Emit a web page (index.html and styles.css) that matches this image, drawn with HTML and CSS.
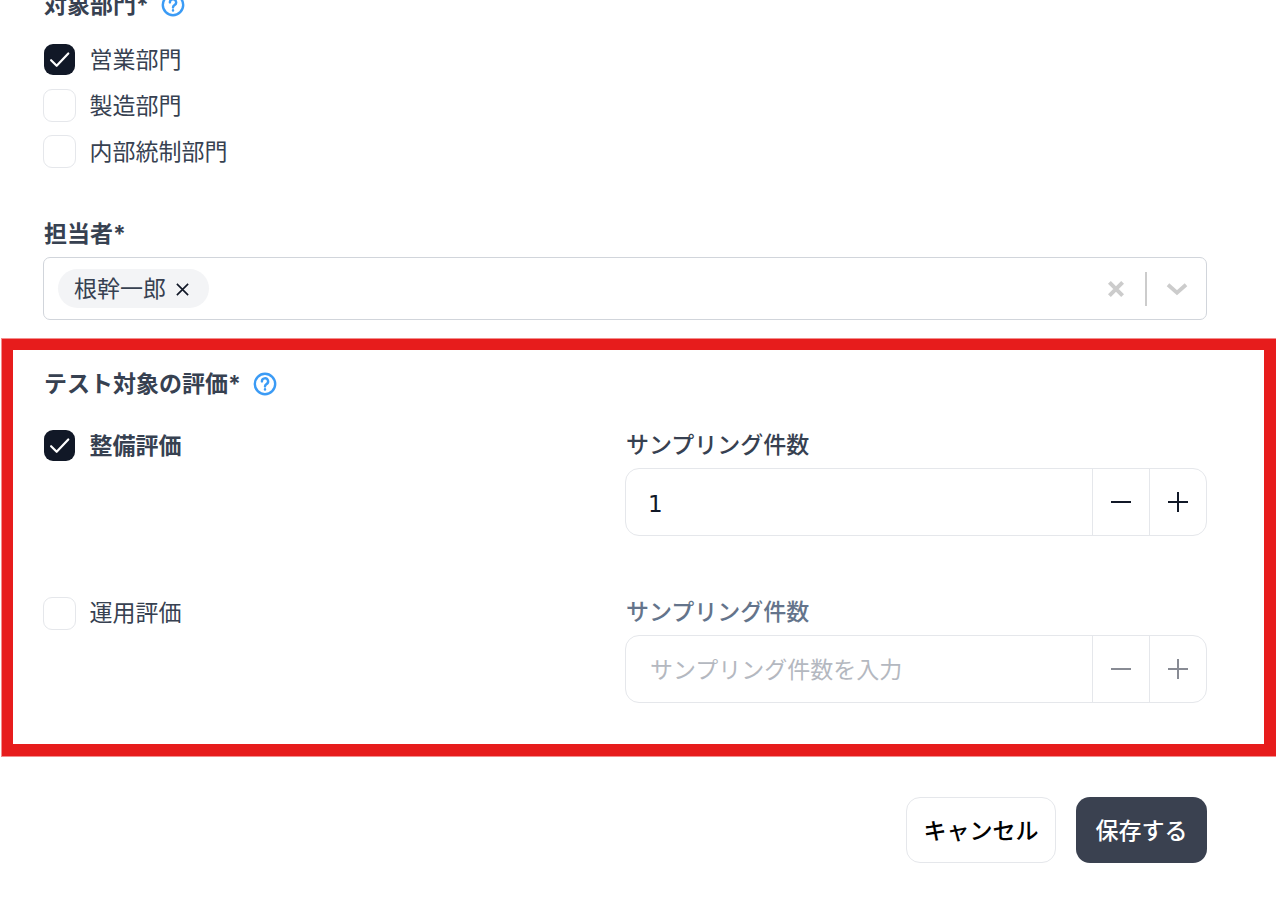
FILE: index.html
```html
<!DOCTYPE html>
<html lang="ja">
<head>
  <meta charset="utf-8">
  <title>テスト対象の評価</title>
  <link rel="stylesheet" href="styles.css">
</head>
<body>

  <form class="form">
    <div class="field">
      <div class="label-row">
        <label class="label">対象部門*</label>
        <svg class="help" viewBox="0 0 24 24"><circle cx="12" cy="12" r="10.2"/><path d="M8.900 9.400a3.100 3.100 0 1 1 4.600 2.700c-1 .6-1.500 1.200-1.500 2.300"/><path d="M12 17.300v.2"/></svg>
      </div>
      <div class="check-list">
        <div class="check-row">
          <span class="check checked"><svg viewBox="0 0 24 24"><path d="M5.500 12.600l4.300 4.300L18.800 7.300"/></svg></span>
          <span class="check-text">営業部門</span>
        </div>
        <div class="check-row">
          <span class="check"></span>
          <span class="check-text">製造部門</span>
        </div>
        <div class="check-row">
          <span class="check"></span>
          <span class="check-text">内部統制部門</span>
        </div>
      </div>
    </div>

    <div class="field owner">
      <label class="label">担当者*</label>
      <div class="select">
        <span class="chip">根幹一郎<svg viewBox="0 0 12 12"><path d="M1.500 1.500l9 9M10.500 1.500l-9 9"/></svg></span>
        <div class="select-icons">
          <svg class="clear" viewBox="0 0 20 20"><path d="M4 4l12 12M16 4L4 16"/></svg>
          <span class="select-sep"></span>
          <svg class="chevron" viewBox="0 0 20 20"><path d="M2.500 6.500L10 13l7.500-6.500"/></svg>
        </div>
      </div>
    </div>

    <div class="field evaluation">
      <div class="label-row">
        <label class="label">テスト対象の評価*</label>
        <svg class="help" viewBox="0 0 24 24"><circle cx="12" cy="12" r="10.2"/><path d="M8.900 9.400a3.100 3.100 0 1 1 4.600 2.700c-1 .6-1.500 1.200-1.500 2.300"/><path d="M12 17.300v.2"/></svg>
      </div>

      <div class="eval-row">
        <div class="check-row">
          <span class="check checked"><svg viewBox="0 0 24 24"><path d="M5.500 12.600l4.300 4.300L18.800 7.300"/></svg></span>
          <span class="check-text strong">整備評価</span>
        </div>
        <div>
          <div class="sub-label">サンプリング件数</div>
          <div class="stepper">
            <span class="stepper-value number">1</span>
            <span class="stepper-btn"><svg viewBox="0 0 20 20"><path d="M0 10h20"/></svg></span>
            <span class="stepper-btn"><svg viewBox="0 0 20 20"><path d="M0 10h20M10 0v20"/></svg></span>
          </div>
        </div>
      </div>

      <div class="eval-row disabled">
        <div class="check-row">
          <span class="check"></span>
          <span class="check-text">運用評価</span>
        </div>
        <div>
          <div class="sub-label">サンプリング件数</div>
          <div class="stepper">
            <span class="stepper-value">サンプリング件数を入力</span>
            <span class="stepper-btn"><svg viewBox="0 0 20 20"><path d="M0 10h20"/></svg></span>
            <span class="stepper-btn"><svg viewBox="0 0 20 20"><path d="M0 10h20M10 0v20"/></svg></span>
          </div>
        </div>
      </div>
    </div>

    <div class="actions">
      <button type="button" class="btn">キャンセル</button>
      <button type="button" class="btn primary">保存する</button>
    </div>
  </form>

  <div class="highlight"></div>

</body>
</html>
```

FILE: styles.css
```css
html, body {
  margin: 0;
  padding: 0;
  height: 919px;
  overflow: hidden;
  background-color: white;
}

body {
  position: relative;
  font-family: Inter, "Noto Sans CJK JP", sans-serif;
  font-size: 23px;
  color: #374151;
}

.form {
  margin-top: -13px;
  padding: 0 69px 0 43px;
}

.label-row {
  display: flex;
  align-items: center;
  gap: 12px;
  height: 36px;
  padding-left: 1px;
}

.label {
  font-weight: 700;
  line-height: 36px;
}

.help {
  width: 24px;
  height: 24px;
  fill: none;
  stroke: #3b9bf5;
  stroke-width: 2.400;
  stroke-linecap: round;
}

.check-list {
  display: flex;
  flex-direction: column;
  gap: 13px;
  margin-top: 20px;
}

.check-list .check-text {
  padding-top: 2px;
}

.check-row {
  display: flex;
  align-items: center;
  gap: 13.500px;
  height: 33px;
}

.check {
  display: block;
  box-sizing: border-box;
  flex: none;
  width: 33px;
  height: 33px;
  background-color: white;
  border: 1px solid #e5e7eb;
  border-radius: 9px;
}

.check.checked {
  width: 31px;
  height: 31px;
  margin: 0 1px;
  background-color: #111827;
  border: none;
}

.eval-row .check.checked {
  margin-top: -2px;
}

.check svg {
  display: block;
  width: 31px;
  height: 31px;
  fill: none;
  stroke: white;
  stroke-width: 1.700;
  stroke-linecap: round;
  stroke-linejoin: round;
}

.check-text {
  line-height: 33px;
}

.check-text.strong {
  font-weight: 700;
}

.owner {
  margin-top: 48px;
}

.owner .label {
  display: block;
  padding-left: 1px;
}

.select {
  display: flex;
  align-items: center;
  justify-content: space-between;
  box-sizing: border-box;
  height: 63px;
  margin-top: 5px;
  padding: 0 17px 0 14px;
  border: 1px solid #d1d5db;
  border-radius: 7px;
}

.chip {
  display: flex;
  align-items: center;
  gap: 9px;
  height: 39px;
  padding: 1px 19px 0 16px;
  box-sizing: border-box;
  background-color: #f3f4f6;
  border-radius: 20px;
  line-height: 38px;
}

.chip svg {
  width: 15px;
  height: 15px;
  fill: none;
  stroke: #111827;
  stroke-width: 1.300;
}

.select-icons {
  display: flex;
  align-items: center;
  gap: 18px;
}

.clear {
  width: 22px;
  height: 22px;
  fill: none;
  stroke: #cccccc;
  stroke-width: 3.600;
}

.select-sep {
  width: 2px;
  height: 34px;
  background-color: #cccccc;
}

.chevron {
  width: 24px;
  height: 24px;
  fill: none;
  stroke: #cccccc;
  stroke-width: 3.200;
}

.evaluation {
  margin-top: 46px;
}

.evaluation .label-row {
  margin-bottom: 3px;
}

.eval-row {
  display: grid;
  grid-template-columns: 582px 582px;
  height: 167px;
}

.eval-row .check-row {
  margin-top: 25px;
}

.sub-label {
  padding-left: 1px;
  font-weight: 500;
  line-height: 33px;
  margin-top: 24px;
}

.stepper {
  display: flex;
  align-items: stretch;
  box-sizing: border-box;
  height: 68px;
  margin-top: 6px;
  background-color: white;
  border: 1px solid #e5e7eb;
  border-radius: 14px;
}

.stepper-value {
  flex: 1;
  padding: 2px 0 0 24px;
  line-height: 64px;
  color: #111827;
}

.stepper-value.number {
  padding: 3px 0 0 22px;
  font-family: "DejaVu Sans", sans-serif;
}

.stepper-btn {
  display: flex;
  align-items: center;
  justify-content: center;
  width: 56px;
  border-left: 1px solid #e5e7eb;
}

.stepper-btn svg {
  width: 20px;
  height: 20px;
  fill: none;
  stroke: #111827;
  stroke-width: 2;
}

.disabled .sub-label {
  color: #64748b;
}

.disabled .stepper-value {
  color: #b4b8c0;
}

.disabled .stepper-btn svg {
  stroke: #888b94;
}

.actions {
  display: flex;
  justify-content: flex-end;
  gap: 20px;
  margin-top: 58px;
}

.btn {
  height: 66px;
  padding: 0 16.500px 2px;
  font-family: inherit;
  font-size: 23px;
  font-weight: 500;
  color: #000000;
  background-color: white;
  border: 1px solid #e5e7eb;
  border-radius: 14px;
}

.btn.primary {
  padding: 0 19.500px 2px;
  color: white;
  background-color: #3a4150;
  border: none;
}

/* annotation drawn over the page */
.highlight {
  position: absolute;
  left: 2px;
  top: 339px;
  width: 1274px;
  height: 417px;
  box-sizing: border-box;
  border-style: solid;
  border-color: #e71c1c;
  border-width: 11px 12px 12px 11px;
  box-shadow: 0 0 0 1px rgba(231, 28, 28, 0.5);
  pointer-events: none;
}
```
